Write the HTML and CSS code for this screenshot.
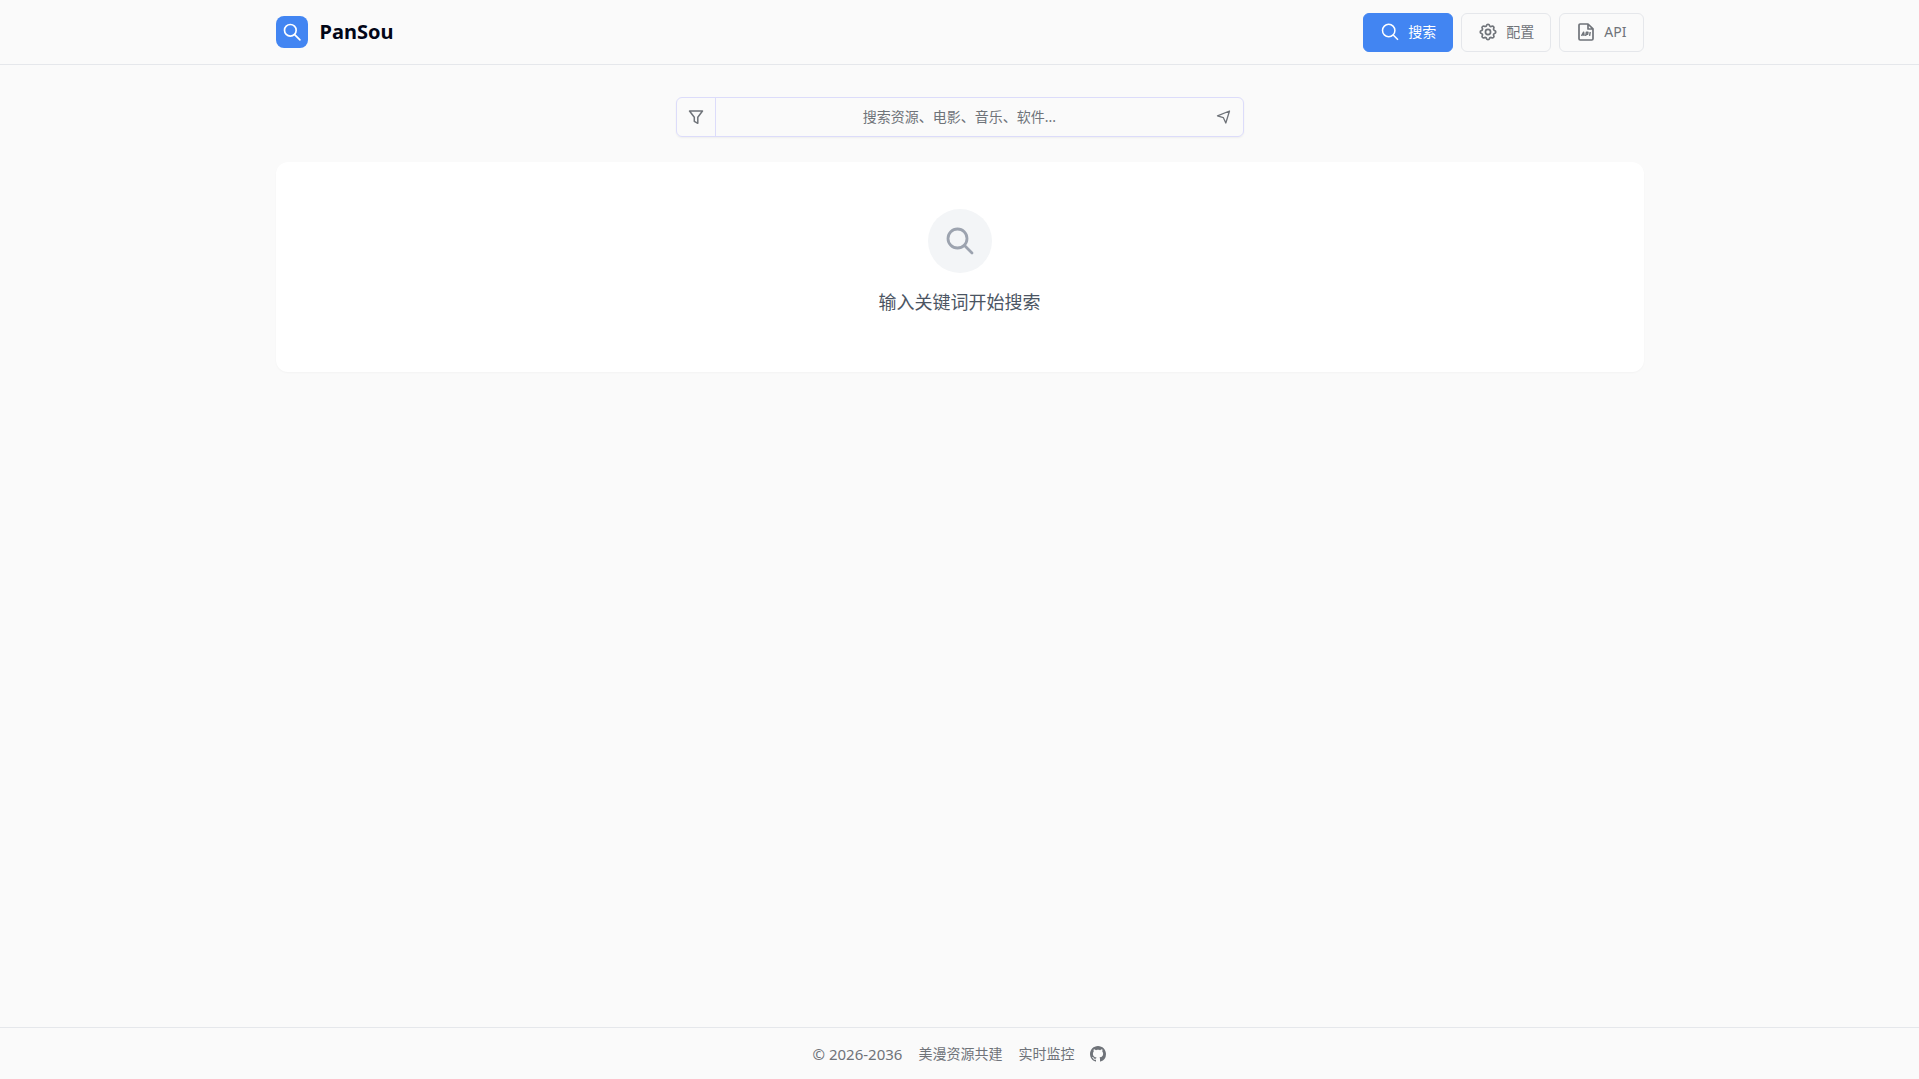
FILE: index.html
```html
<!DOCTYPE html>
<html lang="zh-CN">
<head>
    <meta charset="UTF-8">
    <meta name="viewport" content="width=device-width, initial-scale=1.0">
    <title>PanSou</title>
    <link rel="stylesheet" href="styles.css">
</head>
<body>
    <header class="header">
        <div class="container header-inner">
            <div class="brand">
                <span class="logo">
                    <svg class="icon-logo" viewBox="0 0 24 24" fill="none" stroke="currentColor" stroke-width="2" stroke-linecap="round"><circle cx="10" cy="10" r="7"/><path d="M15.2 15.2L21.5 21.5"/></svg>
                </span>
                <h1>PanSou</h1>
            </div>
            <nav class="nav">
                <button type="button" class="nav-btn active">
                    <svg class="icon-nav" viewBox="0 0 18 18" fill="none" stroke="currentColor" stroke-width="1.5"><circle cx="7.7" cy="7.5" r="6.2"/><path d="M12.2 12L17 16.8"/></svg>
                    搜索
                </button>
                <button type="button" class="nav-btn">
                    <svg class="icon-nav" viewBox="1.5 1.5 21 21" fill="none" stroke="currentColor" stroke-width="2" stroke-linejoin="round"><path d="M10.3 4.3c.4-1.8 3-1.8 3.4 0a1.7 1.7 0 0 0 2.6 1.1c1.5-.9 3.3.8 2.4 2.4a1.7 1.7 0 0 0 1 2.5c1.8.4 1.8 3 0 3.4a1.7 1.7 0 0 0-1 2.6c.9 1.5-.9 3.3-2.4 2.4a1.7 1.7 0 0 0-2.6 1c-.4 1.8-3 1.8-3.4 0a1.7 1.7 0 0 0-2.6-1c-1.5.9-3.3-.9-2.4-2.4a1.7 1.7 0 0 0-1-2.6c-1.8-.4-1.8-3 0-3.4a1.7 1.7 0 0 0 1-2.6c-.9-1.5.9-3.3 2.4-2.4 1 .6 2.3.1 2.6-1z"/><circle cx="12" cy="12" r="3"/></svg>
                    配置
                </button>
                <button type="button" class="nav-btn">
                    <svg class="icon-nav" viewBox="0 0 18 18" fill="none" stroke="currentColor" stroke-width="1.7" stroke-linejoin="round"><path d="M11 1H3.2Q2 1 2 2.2V15.8Q2 17 3.2 17H14.8Q16 17 16 15.8V5.8zM11 1V6H16"/><path d="M4.5 12.8L6.6 9.2L7.2 12.8M5.3 11.8H7M8.7 13L9.3 9.3H11L10.6 11.3H9M13.2 9L12.6 12.8" stroke-width="1.4"/></svg>
                    API
                </button>
            </nav>
        </div>
    </header>

    <main class="container main">
        <form class="search-box">
            <button type="button" class="filter-btn" aria-label="筛选">
                <svg class="icon-filter" viewBox="0 0 16 16" fill="none" stroke="currentColor" stroke-width="1.5" stroke-linejoin="round"><path d="M1.5 2H14.5L9.8 8.2V14.3L6.3 12.3V8.2z"/></svg>
            </button>
            <input type="text" class="search-input" aria-label="搜索" placeholder="搜索资源、电影、音乐、软件...">
            <button type="submit" class="send-btn" aria-label="开始搜索">
                <svg class="icon-send" viewBox="0 0 16 16" fill="none" stroke="currentColor" stroke-width="1.3" stroke-linejoin="round"><path d="M14.5 2L2.5 6.8L8.3 8.6L10.8 14z"/></svg>
            </button>
        </form>

        <section class="empty">
            <div class="empty-icon">
                <svg class="icon-empty" viewBox="0 0 32 32" fill="none" stroke="currentColor" stroke-width="2.8" stroke-linecap="round"><circle cx="13.5" cy="13.5" r="9.5"/><path d="M20.5 20.5L28 28"/></svg>
            </div>
            <p>输入关键词开始搜索</p>
        </section>
    </main>

    <footer class="footer">
        <span class="copyright">© 2026-2036</span>
        <a href="#">美漫资源共建</a>
        <a href="#">实时监控</a>
        <a href="#" aria-label="GitHub">
            <svg class="icon-github" viewBox="0 0 16 16" fill="currentColor"><path d="M8 0C3.58 0 0 3.58 0 8c0 3.54 2.29 6.53 5.47 7.59.4.07.55-.17.55-.38 0-.19-.01-.82-.01-1.49-2.01.37-2.53-.49-2.69-.94-.09-.23-.48-.94-.82-1.13-.28-.15-.68-.52-.01-.53.63-.01 1.08.58 1.23.82.72 1.21 1.87.87 2.33.66.07-.52.28-.87.51-1.07-1.78-.2-3.64-.89-3.64-3.95 0-.87.31-1.59.82-2.15-.08-.2-.36-1.02.08-2.12 0 0 .67-.21 2.2.82.64-.18 1.32-.27 2-.27s1.36.09 2 .27c1.53-1.04 2.2-.82 2.2-.82.44 1.1.16 1.92.08 2.12.51.56.82 1.27.82 2.15 0 3.07-1.87 3.75-3.65 3.95.29.25.54.73.54 1.48 0 1.07-.01 1.93-.01 2.2 0 .21.15.46.55.38A8.01 8.01 0 0 0 16 8c0-4.42-3.58-8-8-8z"/></svg>
        </a>
    </footer>
</body>
</html>
```

FILE: styles.css
```css
* {
    box-sizing: border-box;
}
body {
    display: flex;
    flex-direction: column;
    min-height: 100vh;
    margin: 0;
    background-color: #fafafa;
    color: #6f7379;
    font-family: "Noto Sans", "Noto Sans CJK SC", sans-serif;
    font-size: 14px;
    line-height: 20px;
}
button, input {
    font: inherit;
    color: inherit;
    margin: 0;
}
button {
    cursor: pointer;
}
svg {
    display: block;
    flex-shrink: 0;
}
a {
    color: inherit;
    text-decoration: none;
}
.container {
    width: 100%;
    max-width: 1400px;
    margin: 0 auto;
    padding: 0 16px;
}

/* Header */
.header {
    border-bottom: 1px solid #e5e7eb;
}
.header-inner {
    display: flex;
    align-items: center;
    justify-content: space-between;
    height: 64px;
}
.brand {
    display: flex;
    align-items: center;
    gap: 12px;
}
.brand h1 {
    margin: 0;
    color: #020617;
    font-size: 20px;
    line-height: 28px;
    font-weight: 700;
}
.logo {
    display: flex;
    align-items: center;
    justify-content: center;
    width: 32px;
    height: 32px;
    border-radius: 8px;
    background-color: #4285f2;
    color: white;
}
.icon-logo {
    width: 20px;
    height: 20px;
}
.nav {
    display: flex;
    gap: 8px;
}
.nav-btn {
    display: flex;
    align-items: center;
    gap: 9px;
    height: 39px;
    padding: 0 16px 0 17px;
    border: 1px solid #e5e7eb;
    border-radius: 6px;
    background-color: #fafafa;
}
.nav-btn.active {
    border-color: #4285f2;
    background-color: #4285f2;
    color: white;
}
.icon-nav {
    width: 18px;
    height: 18px;
}

/* Search */
.main {
    flex: 1;
    padding-top: 32px;
}
.search-box {
    display: flex;
    max-width: 568px;
    height: 40px;
    margin: 0 auto 25px;
    border: 1px solid #dcdcfa;
    border-radius: 6px;
    box-shadow: 0 1px 2px rgba(0,0,0,0.05);
}
.filter-btn, .send-btn {
    display: flex;
    align-items: center;
    justify-content: center;
    width: 39px;
    padding: 0;
    border: none;
    background: none;
}
.filter-btn {
    border-right: 1px solid #dcdcfa;
}
.icon-filter, .icon-send {
    width: 16px;
    height: 16px;
}
.search-input {
    flex: 1;
    min-width: 0;
    padding: 0;
    border: none;
    outline: none;
    background: none;
    text-align: center;
}
.search-input::placeholder {
    color: #6f7379;
    opacity: 1;
}

/* Empty state */
.empty {
    display: flex;
    flex-direction: column;
    align-items: center;
    gap: 15px;
    padding: 47px 16px 56px;
    border-radius: 12px;
    background-color: white;
    box-shadow: 0 1px 2px rgba(0,0,0,0.03);
}
.empty-icon {
    display: flex;
    align-items: center;
    justify-content: center;
    width: 64px;
    height: 64px;
    border-radius: 50%;
    background-color: #f3f5f7;
    color: #9ca3af;
}
.icon-empty {
    width: 32px;
    height: 32px;
}
.empty p {
    margin: 0;
    color: #4b5563;
    font-size: 18px;
    line-height: 28px;
}

/* Footer */
.footer {
    display: flex;
    align-items: center;
    justify-content: center;
    gap: 16px;
    height: 52px;
    border-top: 1px solid #e5e7eb;
}
.copyright {
    font-size: 15px;
}
.icon-github {
    width: 16px;
    height: 16px;
}
```
